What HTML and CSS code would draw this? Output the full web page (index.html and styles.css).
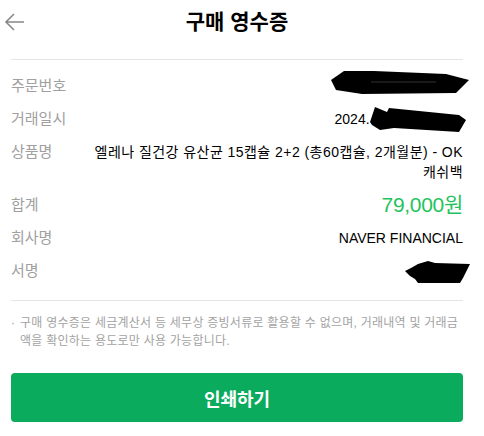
FILE: index.html
```html
<!DOCTYPE html>
<html lang="ko">
<head>
<meta charset="utf-8">
<link rel="stylesheet" href="styles.css">
</head>
<body>
<div class="page">
  <header class="header">
    <svg class="back" width="22" height="20" viewBox="0 0 22 20"><path d="M20 10H2M10 2L2 10l8 8" fill="none" stroke="#888" stroke-width="1.6"/></svg>
    <h1 class="title">구매 영수증</h1>
  </header>
  <section class="rows">
    <div class="row">
      <span class="label">주문번호</span>
      <span class="value"></span>
      <svg class="mask m1" width="140" height="26" viewBox="0 0 140 26"><polygon points="13,1 43,1 115,4 138,10 125,23 31,24 5,20 0,10" fill="#000"/><line x1="40" y1="12" x2="105" y2="12" stroke="#555" stroke-width="0.6"/></svg>
    </div>
    <div class="row">
      <span class="label">거래일시</span>
      <span class="value">2024.<span class="hidden">01.01 00:00:00</span></span>
      <svg class="mask m2" width="98" height="27" viewBox="0 0 98 27"><polygon points="1,16 6,1 18,6 20,2 90,9 97,14 90,26 25,22 11,24 3,19" fill="#000"/></svg>
    </div>
    <div class="row">
      <span class="label">상품명</span>
      <span class="value product">엘레나 질건강 유산균 15캡슐 2+2 (총60캡슐, 2개월분) - OK 캐쉬백</span>
    </div>
    <div class="row">
      <span class="label">합계</span>
      <span class="value amount">79,000원</span>
    </div>
    <div class="row">
      <span class="label">회사명</span>
      <span class="value">NAVER FINANCIAL</span>
    </div>
    <div class="row">
      <span class="label">서명</span>
      <span class="value"></span>
      <svg class="mask m3" width="68" height="25" viewBox="0 0 68 25"><polygon points="7,8 14,4 24,1 31,3 66,4 59,18 56,23 14,23 11,19 6,16 1,11" fill="#000"/></svg>
    </div>
  </section>
  <p class="note"><span class="dot">·</span><span>구매 영수증은 세금계산서 등 세무상 증빙서류로 활용할 수 없으며, 거래내역 및 거래금액을 확인하는 용도로만 사용 가능합니다.</span></p>
  <button class="print">인쇄하기</button>
</div>
</body>
</html>
```

FILE: styles.css
```css
html, body {
  margin: 0;
  padding: 0;
  background: #fff;
}
body {
  font-family: "Liberation Sans", "Noto Sans CJK KR", sans-serif;
  color: #000;
}
.page {
  padding: 0 21px 0 11px;
  width: 452px;
}
.header {
  position: relative;
  height: 59px;
  border-bottom: 1px solid #e4e4e4;
  display: flex;
  justify-content: center;
}
.back {
  position: absolute;
  left: -7px;
  top: 12px;
}
.title {
  margin: 0;
  margin-top: 8px;
  font-size: 21px;
  line-height: 28px;
  font-weight: bold;
}
.rows {
  display: flex;
  flex-direction: column;
  gap: 13px;
  padding: 16px 0 19px;
  border-bottom: 1px solid #e4e4e4;
}
.row {
  position: relative;
  display: flex;
  justify-content: space-between;
  align-items: flex-start;
  min-height: 20px;
}
.label {
  flex: 0 0 77px;
  font-size: 15px;
  line-height: 20px;
  color: #a0a0a0;
}
.value {
  flex: 1;
  text-align: right;
  font-size: 14px;
  line-height: 20px;
}
.product {
  word-break: keep-all;
  letter-spacing: 0.45px;
}
.hidden {
  color: transparent;
}
.amount {
  font-size: 21px;
  color: #1fc35e;
  letter-spacing: -0.3px;
}
.mask {
  position: absolute;
  display: block;
}
.m1 { top: -6px; right: -8px; }
.m2 { top: -3px; right: -4px; }
.m3 { top: -1px; right: -9px; }
.note {
  display: flex;
  margin: 13px 0 0;
  font-size: 12px;
  line-height: 18px;
  color: #a3a3a3;
  letter-spacing: 0.25px;
}
.dot {
  flex: 0 0 9px;
  letter-spacing: 0;
}
.print {
  display: block;
  width: 452px;
  height: 49px;
  margin-top: 23px;
  border: 0;
  border-radius: 4px;
  background: #0aab5c;
  color: #fff;
  font-family: "Liberation Sans", "Noto Sans CJK KR", sans-serif;
  font-size: 18px;
  font-weight: bold;
}
```
